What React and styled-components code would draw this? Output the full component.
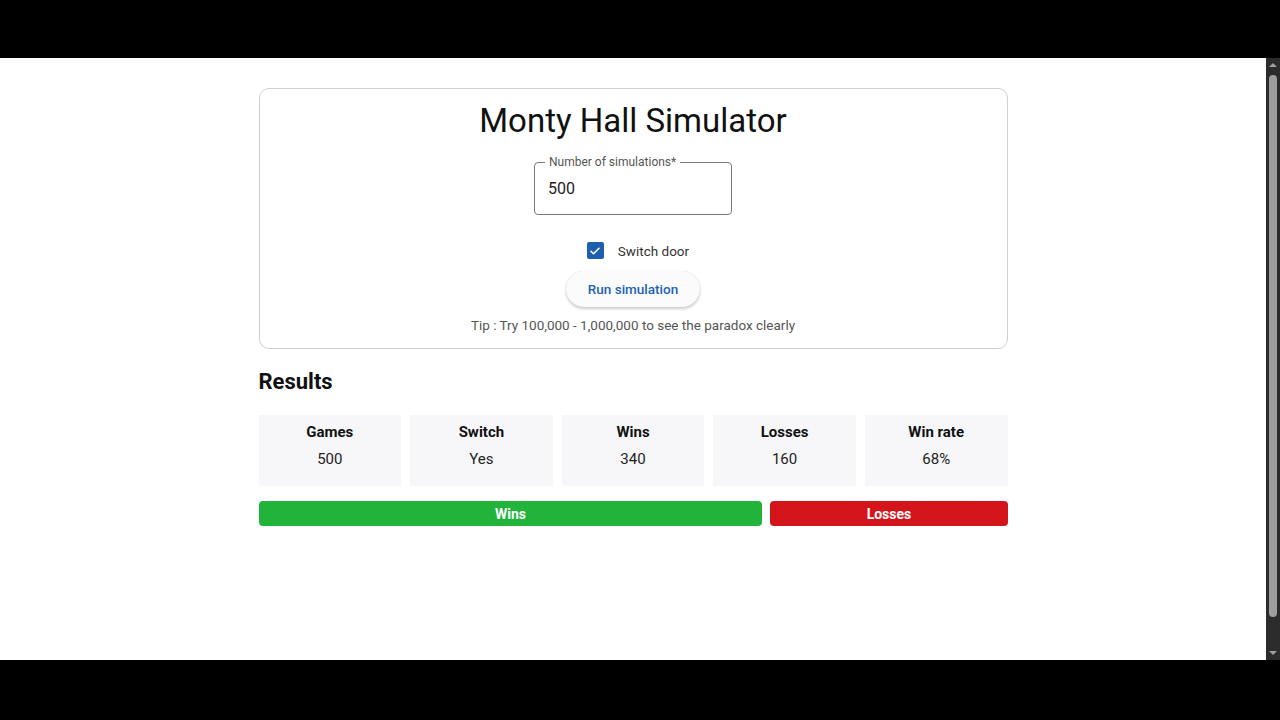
import React from 'react'
import styled, { createGlobalStyle } from 'styled-components'

const GlobalStyle = createGlobalStyle`
    html, body {
        margin: 0;
        padding: 0;
        background: #000;
        font-family: Roboto, "Liberation Sans", Arial, sans-serif;
    }
`

const stats = [
    { label: 'Games', value: '500' },
    { label: 'Switch', value: 'Yes' },
    { label: 'Wins', value: '340' },
    { label: 'Losses', value: '160' },
    { label: 'Win rate', value: '68%' },
]

function App() {
    const wins = 340
    const losses = 160

    return (
        <Screen>
            <GlobalStyle />
            <Letterbox />
            <Frame>
                <Page>
                    <Container>
                        <Card>
                            <Title>Monty Hall Simulator</Title>
                            <Field>
                                <FieldLabel>Number of simulations*</FieldLabel>
                                <Input defaultValue="500" />
                            </Field>
                            <CheckRow>
                                <Box>
                                    <svg width="12" height="12" viewBox="0 0 24 24">
                                        <path d="M4 12.5l5 5L20 6.5" fill="none" stroke="#fff" strokeWidth="3.2" strokeLinecap="round" strokeLinejoin="round" />
                                    </svg>
                                </Box>
                                <CheckLabel>Switch door</CheckLabel>
                            </CheckRow>
                            <RunButton>Run simulation</RunButton>
                            <Tip>Tip : Try 100,000 - 1,000,000 to see the paradox clearly</Tip>
                        </Card>

                        <Heading>Results</Heading>
                        <StatGrid>
                            {stats.map(s => (
                                <Stat key={s.label}>
                                    <StatLabel>{s.label}</StatLabel>
                                    <StatValue>{s.value}</StatValue>
                                </Stat>
                            ))}
                        </StatGrid>
                        <Bars>
                            <Bar color="#22b33b" style={{ flex: wins }}>Wins</Bar>
                            <Bar color="#d3141b" style={{ flex: losses }}>Losses</Bar>
                        </Bars>
                    </Container>
                </Page>
                <Scrollbar>
                    <Arrow up />
                    <Track>
                        <Thumb />
                    </Track>
                    <Arrow />
                </Scrollbar>
            </Frame>
            <Letterbox />
        </Screen>
    )
}

export default App

const Screen = styled.div`
    width: 1280px;
    height: 720px;
    display: flex;
    flex-direction: column;
    background: #000;
    overflow: hidden;
`

const Letterbox = styled.div`
    height: 58px;
    flex: 0 0 58px;
    background: #000;
`

const Frame = styled.div`
    height: 602px;
    display: flex;
`

const Page = styled.div`
    flex: 1;
    background: #fff;
    padding-top: 30px;
`

const Container = styled.div`
    width: 749px;
    margin: 0 auto;
`

const Card = styled.div`
    border: 1px solid #cfcfcf;
    border-radius: 10px;
    padding: 12px 16px 15px;
    display: flex;
    flex-direction: column;
    align-items: center;
`

const Title = styled.h1`
    margin: 0;
    font-size: 33px;
    font-weight: 400;
    line-height: 40px;
    color: #111;
`

const Field = styled.div`
    margin-top: 21px;
    padding: 0 13px;
    width: 198px;
    height: 53px;
    box-sizing: border-box;
    border: 1px solid #7a7a7a;
    border-radius: 4px;
    position: relative;
    display: flex;
    align-items: center;
`

const FieldLabel = styled.span`
    position: absolute;
    top: -7px;
    left: 10px;
    font-size: 12px;
    line-height: 12px;
    color: #555;
    padding: 0 4px;
    background: #fff;
`

const Input = styled.input`
    border: none;
    outline: none;
    background: transparent;
    font-family: inherit;
    font-size: 16px;
    color: #222;
    padding: 0;
    width: 100%;
`

const CheckRow = styled.div`
    display: flex;
    align-items: center;
    gap: 14px;
    margin: 27px 0 0 10px;
`

const Box = styled.div`
    width: 17px;
    height: 17px;
    border-radius: 2px;
    background: #1c5fb0;
    display: flex;
    align-items: center;
    justify-content: center;
`

const CheckLabel = styled.span`
    font-size: 13.5px;
    color: #333;
`

const RunButton = styled.button`
    margin-top: 12px;
    width: 134px;
    height: 36px;
    border: none;
    border-radius: 18px;
    background: #fbfbfb;
    box-shadow: 0 2px 3px rgba(0, 0, 0, 0.2), 0 0 1px rgba(0, 0, 0, 0.15);
    color: #1c63b8;
    font-family: inherit;
    font-size: 13.5px;
    font-weight: 500;
    cursor: pointer;
`

const Tip = styled.p`
    margin: 10px 0 0;
    font-size: 13.5px;
    color: #555;
`

const Heading = styled.h2`
    margin: 20px 0 0;
    font-size: 22px;
    font-weight: 700;
    line-height: 26px;
    color: #111;
`

const StatGrid = styled.div`
    display: grid;
    grid-template-columns: repeat(5, 1fr);
    gap: 9px;
    margin-top: 20px;
`

const Stat = styled.div`
    height: 71px;
    background: #f7f7f9;
    display: flex;
    flex-direction: column;
    align-items: center;
    padding-top: 8px;
    box-sizing: border-box;
`

const StatLabel = styled.div`
    font-size: 15px;
    font-weight: 700;
    color: #111;
    line-height: 18px;
`

const StatValue = styled.div`
    font-size: 15px;
    color: #222;
    margin-top: 9px;
    line-height: 18px;
`

const Bars = styled.div`
    display: flex;
    gap: 8px;
    margin-top: 15px;
`

const Bar = styled.div`
    height: 25px;
    border-radius: 4px;
    background: ${p => p.color};
    color: #fff;
    font-size: 14px;
    font-weight: 700;
    display: flex;
    align-items: center;
    justify-content: center;
`

const Scrollbar = styled.div`
    width: 14px;
    background: #2c2c2c;
    display: flex;
    flex-direction: column;
    align-items: center;
`

const Arrow = styled.div`
    width: 0;
    height: 0;
    margin: 5px 0;
    border-left: 4px solid transparent;
    border-right: 4px solid transparent;
    ${p => p.up ? 'border-bottom: 4px solid #a0a0a0;' : 'border-top: 4px solid #a0a0a0;'}
`

const Track = styled.div`
    flex: 1;
    width: 100%;
    display: flex;
    justify-content: center;
    padding: 3px 0 29px;
    box-sizing: border-box;
`

const Thumb = styled.div`
    width: 8px;
    background: #9e9e9e;
    border-radius: 4px;
`
